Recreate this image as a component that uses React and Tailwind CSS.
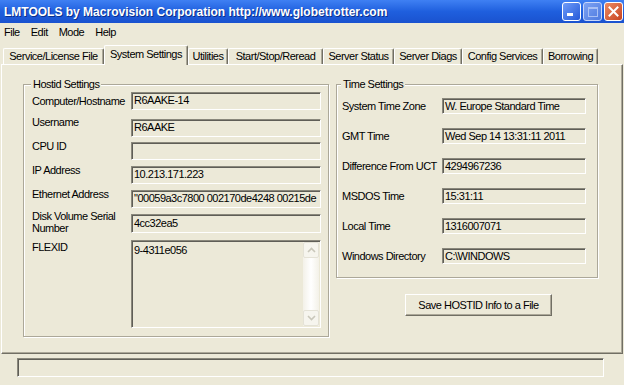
const FONT = "font-['Liberation_Sans',Arial,sans-serif]"

const TABS = [
  { label: 'Service/License File', w: 'w-[101px]' },
  { label: 'System Settings', w: 'w-[84px]', active: true },
  { label: 'Utilities', w: 'w-[40px]' },
  { label: 'Start/Stop/Reread', w: 'w-[95px]' },
  { label: 'Server Status', w: 'w-[71px]' },
  { label: 'Server Diags', w: 'w-[68px]' },
  { label: 'Config Services', w: 'w-[81px]' },
  { label: 'Borrowing', w: 'w-[55px]' },
]

// label/input offsets inside each row, row height = distance to next row
const HOST_ROWS = [
  { label: 'Computer/Hostname', value: 'R6AAKE-14', h: 'h-[23px]', lm: 'mt-[2px]', im: 'mt-0' },
  { label: 'Username', value: 'R6AAKE', h: 'h-[24px]', lm: 'mt-0', im: 'mt-[4px]' },
  { label: 'CPU ID', value: '', h: 'h-[24px]', lm: 'mt-0', im: 'mt-[3px]' },
  { label: 'IP Address', value: '10.213.171.223', h: 'h-[24px]', lm: 'mt-0', im: 'mt-[3px]' },
  { label: 'Ethernet Address', value: '"00059a3c7800 002170de4248 00215de', h: 'h-[23px]', lm: 'mt-0', im: 'mt-[3px]' },
]

const TIME_ROWS = [
  { label: 'System Time Zone', value: 'W. Europe Standard Time' },
  { label: 'GMT Time', value: 'Wed Sep 14 13:31:11 2011' },
  { label: 'Difference From UCT', value: '4294967236' },
  { label: 'MSDOS Time', value: '15:31:11' },
  { label: 'Local Time', value: '1316007071' },
  { label: 'Windows Directory', value: 'C:\\WINDOWS' },
]

const sunken = 'border border-t-[#8a887c] border-l-[#8a887c] border-r-white border-b-white shadow-[inset_1px_1px_0_#5f5e57]'
const etched = 'border border-[#aca899] shadow-[inset_1px_1px_0_#fff,1px_1px_0_#fff]'

function Field({ value, cls }) {
  return (
    <div className={`${sunken} ${cls} overflow-hidden whitespace-nowrap pl-[2px] leading-[15px] text-black`}>
      {value}
    </div>
  )
}

function Chevron({ up }) {
  return (
    <svg width="9" height="6" viewBox="0 0 9 6">
      <path d={up ? 'M1 5 L4.5 1.5 L8 5' : 'M1 1 L4.5 4.5 L8 1'} fill="none" stroke="#c9c7ba" strokeWidth="1.6" />
    </svg>
  )
}

function TitleButtons() {
  return (
    <div className="flex gap-[2px] items-center">
      <div className="w-[19px] h-[19px] rounded-[3px] border border-white bg-gradient-to-br from-[#6f9bf8] to-[#2458d8] flex items-end p-[4px]">
        <span className="w-[6px] h-[3px] bg-white" />
      </div>
      <div className="w-[19px] h-[19px] rounded-[3px] border border-[#c7d6fa] bg-gradient-to-br from-[#7ea2f2] to-[#4e7ae0] flex items-center justify-center">
        <span className="w-[10px] h-[10px] border border-[#a9c0f5] border-t-2" />
      </div>
      <div className="w-[19px] h-[19px] rounded-[3px] border border-white bg-gradient-to-br from-[#ec8a63] to-[#c8421d] flex items-center justify-center">
        <svg width="11" height="11" viewBox="0 0 11 11">
          <path d="M1.5 1.5 L9.5 9.5 M9.5 1.5 L1.5 9.5" stroke="#fff" strokeWidth="2" strokeLinecap="square" />
        </svg>
      </div>
    </div>
  )
}

export default function App() {
  return (
    <div className={`${FONT} w-[624px] h-[385px] bg-[#ece9d8] flex flex-col overflow-hidden text-[11px] tracking-[-0.5px] text-black`}>
      {/* title bar */}
      <div className="h-[23px] flex items-center justify-between pl-[4px] pr-[1px] bg-gradient-to-b from-[#3f80f3] via-[#1f5fde] to-[#1a52cf]">
        <span className="text-white font-bold text-[12px] tracking-normal [text-shadow:1px_1px_0_#0b2f8a]">
          LMTOOLS by Macrovision Corporation http://www.globetrotter.com
        </span>
        <TitleButtons />
      </div>

      {/* menu */}
      <div className="h-[19px] flex items-center gap-[11px] pl-[4px]">
        <span>File</span>
        <span>Edit</span>
        <span>Mode</span>
        <span>Help</span>
      </div>

      {/* tabs */}
      <div className="h-[22px] flex items-end pl-[3px] relative z-10">
        {TABS.map(t => (
          <div
            key={t.label}
            className={`${t.w} ${t.active ? 'h-[20px] mb-[-1px] pb-[3px]' : 'h-[16px]'} shrink-0 bg-[#ece9d8] border-t border-l border-white border-r border-r-[#716f64] rounded-t-[2px] shadow-[inset_-1px_0_0_#aca899] flex items-center justify-center whitespace-nowrap`}
          >
            {t.label}
          </div>
        ))}
      </div>

      {/* tab panel */}
      <div className="ml-[1px] w-[622px] h-[290px] border-t border-l border-white border-r border-b border-r-[#716f64] border-b-[#716f64] shadow-[inset_-1px_-1px_0_#aca899] flex items-start gap-[7px] pl-[21px] pt-[19px]">
        {/* hostid */}
        <div className={`relative w-[306px] h-[253px] ${etched} pl-[8px] pt-[7px]`}>
          <span className="absolute -top-[8px] left-[7px] px-[2px] bg-[#ece9d8] leading-[14px]">Hostid Settings</span>
          {HOST_ROWS.map(r => (
            <div key={r.label} className={`flex ${r.h}`}>
              <div className={`w-[99px] leading-[14px] whitespace-nowrap ${r.lm}`}>{r.label}</div>
              <Field value={r.value} cls={`w-[190px] h-[18px] ${r.im}`} />
            </div>
          ))}
          <div className="flex h-[30px]">
            <div className="w-[99px] leading-[12px]">Disk Volume Serial<br />Number</div>
            <Field value="4cc32ea5" cls="w-[190px] h-[19px] mt-[4px] leading-[16px]" />
          </div>
          <div className="flex">
            <div className="w-[99px] leading-[14px]">FLEXID</div>
            <div className={`${sunken} w-[190px] h-[88px] flex`}>
              <div className="flex-1 pl-[2px] pt-[2px] leading-[15px]">9-4311e056</div>
              <div className="w-[16px] flex flex-col bg-gradient-to-r from-[#f3f1e8] via-white to-[#f3f1e8] mr-[1px] my-[1px]">
                <div className="h-[16px] rounded-[2px] border border-[#e4e2d6] bg-[#f6f5ee] flex items-center justify-center">
                  <Chevron up />
                </div>
                <div className="flex-1" />
                <div className="h-[16px] rounded-[2px] border border-[#e4e2d6] bg-[#f6f5ee] flex items-center justify-center">
                  <Chevron />
                </div>
              </div>
            </div>
          </div>
        </div>

        {/* time + button */}
        <div className="flex flex-col">
          <div className={`relative w-[262px] h-[194px] ${etched} pl-[5px] pt-[13px] flex flex-col gap-[14px]`}>
            <span className="absolute -top-[8px] left-[4px] px-[2px] bg-[#ece9d8] leading-[14px]">Time Settings</span>
            {TIME_ROWS.map(r => (
              <div key={r.label} className="flex items-center h-[16px]">
                <div className="w-[100px] whitespace-nowrap">{r.label}</div>
                <Field value={r.value} cls="w-[144px] h-[16px] leading-[14px]" />
              </div>
            ))}
          </div>
          <button className="mt-[16px] ml-[69px] w-[147px] h-[22px] border border-t-white border-l-white border-r-[#716f64] border-b-[#716f64] shadow-[inset_-1px_-1px_0_#aca899] bg-[#ece9d8] whitespace-nowrap">
            Save HOSTID Info to a File
          </button>
        </div>
      </div>

      {/* status bar */}
      <div className={`mt-[4px] ml-[17px] w-[587px] h-[19px] ${sunken}`} />
    </div>
  )
}
